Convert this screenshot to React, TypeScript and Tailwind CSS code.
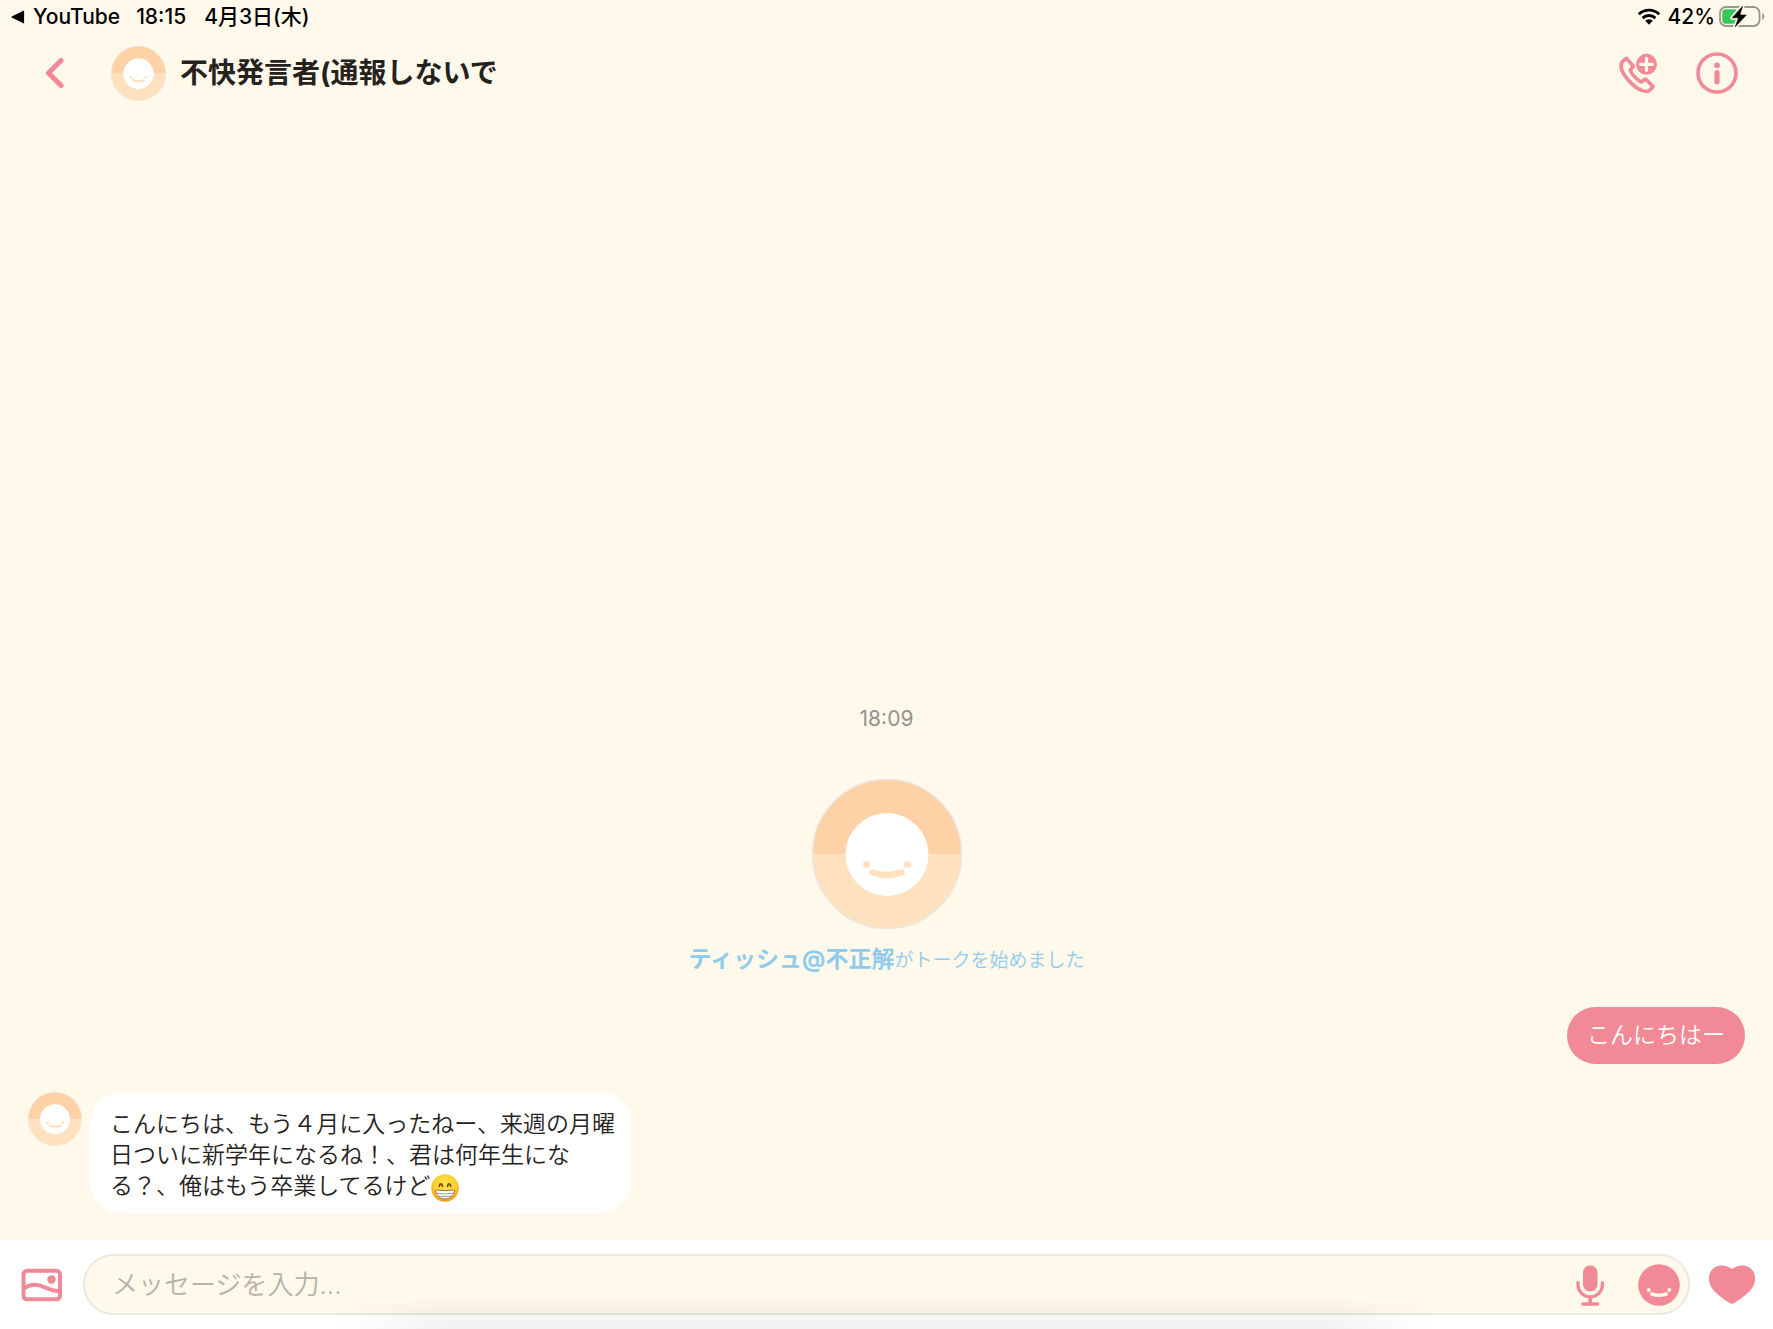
import { useId } from "react";

const PINK = "#f28997";

function Avatar({ className }: { className: string }) {
  const id = useId();
  return (
    <svg viewBox="0 0 150 150" className={className} role="img" aria-label="アイコン">
      <defs>
        <clipPath id={id}>
          <circle cx="75" cy="75" r="74.5" />
        </clipPath>
      </defs>
      <g clipPath={`url(#${id})`}>
        <rect width="150" height="75.5" fill="#fed1a6" />
        <rect y="75.5" width="150" height="75" fill="#fee2c0" />
      </g>
      <circle cx="75" cy="75" r="74.5" fill="none" stroke="#ece7de" strokeWidth="1.5" />
      <circle cx="75" cy="75.5" r="41.5" fill="#fff" />
      <circle cx="54.5" cy="85.5" r="3.6" fill="#fee1be" />
      <circle cx="95.5" cy="85.5" r="3.6" fill="#fee1be" />
      <path d="M60.500 93.500q14.500 5 29 0" fill="none" stroke="#fee1be" strokeWidth="6.500" strokeLinecap="round" />
    </svg>
  );
}

function GrinEmoji() {
  return (
    <svg viewBox="0 0 28 28" className="inline-block size-7 align-middle" role="img" aria-label="😁">
      <defs>
        <radialGradient id="grin-face" cx="50%" cy="36%" r="66%">
          <stop offset="0" stopColor="#ffe650" />
          <stop offset="0.6" stopColor="#ffcf30" />
          <stop offset="1" stopColor="#ee9418" />
        </radialGradient>
      </defs>
      <circle cx="14" cy="14" r="13.800" fill="url(#grin-face)" />
      <path d="M8.300 12.300c.5-3.300 2.600-3.300 3.200 0M16.500 12.300c.6-3.300 2.700-3.300 3.200 0" fill="none" stroke="#7a4d12" strokeWidth="1.700" strokeLinecap="round" />
      <path d="M5 16q9 1.400 18 0q.7 0 .5 1c-1 4.900-4.800 7.900-9.500 7.900s-8.500-3-9.500-7.900q-.2-1 .5-1z" fill="#fff" stroke="#8f6a3c" strokeWidth="0.900" />
      <path d="M5.200 19.200q8.800 1.600 17.600 0M7.600 22q6.400 1.200 12.800 0" fill="none" stroke="#8f8d8a" strokeWidth="0.900" />
    </svg>
  );
}

function StatusBar() {
  return (
    <div className="flex h-[34px] items-center justify-between pr-2 pl-[11px] text-[21px] font-medium text-black">
      <div className="flex items-center">
        <a href="#youtube" className="flex items-center gap-2">
          <svg viewBox="0 0 14 14" className="size-3.5" aria-hidden="true">
            <path d="M1 7L12.500 1.200v11.600z" fill="#000" stroke="#000" strokeWidth="1.200" strokeLinejoin="round" />
          </svg>
          YouTube
        </a>
        <time className="ml-4">18:15</time>
        <span className="ml-[18px]">4月3日(木)</span>
      </div>
      <div className="flex items-center">
        <svg viewBox="0 0 24 18" className="h-[18px] w-6" aria-label="Wi-Fi" role="img">
          <path d="M1.800 6.300a14.600 14.600 0 0 1 20.400 0M5.600 10.100a9.200 9.200 0 0 1 12.800 0" fill="none" stroke="#000" strokeWidth="2.900" />
          <path d="M8.200 12.800a5.500 5.500 0 0 1 7.600 0L12 16.800z" fill="#000" />
        </svg>
        <span className="ml-1.5">42%</span>
        <svg viewBox="0 0 46 24" className="ml-1 h-6 w-[46px]" role="img" aria-label="充電中">
          <rect x="1" y="2" width="39.500" height="19" rx="6" fill="none" stroke="#9c978e" strokeWidth="1.800" />
          <path d="M43.200 8.300v6.600q2.200-1 2.200-3.300t-2.200-3.300z" fill="#9c978e" />
          <rect x="3.300" y="4.300" width="15.500" height="14.400" rx="3.500" fill="#34c759" />
          <path d="M23.500 1.300L13.300 12.800h6.200L16.300 21.800L27.300 10h-6.400z" fill="#000" stroke="#fff9eb" strokeWidth="4" strokeLinejoin="round" />
          <path d="M23.500 1.300L13.300 12.800h6.200L16.300 21.800L27.300 10h-6.400z" fill="#000" stroke="#000" strokeWidth="0.600" strokeLinejoin="round" />
        </svg>
      </div>
    </div>
  );
}

function ChatHeader() {
  return (
    <header className="flex h-[78px] items-center pr-[35px] pl-10">
      <button type="button" aria-label="戻る" className="mr-[43px] cursor-pointer">
        <svg viewBox="0 0 28 32" className="h-8 w-7" aria-hidden="true">
          <path d="M21 3.500L8.500 16L21 28.500" fill="none" stroke={PINK} strokeWidth="5.200" strokeLinecap="round" strokeLinejoin="round" />
        </svg>
      </button>
      <Avatar className="size-[55px]" />
      <h1 className="ml-3.5 flex-1 text-[28px] leading-10 font-bold text-[#25221d]">不快発言者(通報しないで</h1>
      <button type="button" aria-label="通話に追加" className="cursor-pointer">
        <svg viewBox="0 0 40 42" className="h-[42px] w-10" fill="none" aria-hidden="true">
          <path d="M8.300 6.300L4.400 9.700C1.600 12.800 3 19.500 9.800 27.500C16.500 35.400 23.400 39.300 28.500 39.500C30.700 39.600 31.600 38.800 35 34.600L27.600 27.100L23.300 30C19.800 28.700 13.400 22 12.200 18.200L15.400 14.300Z" stroke={PINK} strokeWidth="3.600" strokeLinejoin="round" />
          <circle cx="28.500" cy="12.300" r="10.500" fill={PINK} />
          <path d="M28.500 6.300v12M22.500 12.300h12" stroke="#fff9eb" strokeWidth="3.200" strokeLinecap="round" />
        </svg>
      </button>
      <button type="button" aria-label="情報" className="ml-[38px] cursor-pointer">
        <svg viewBox="0 0 42 42" className="size-[42px]" fill="none" aria-hidden="true">
          <circle cx="21" cy="21" r="19" stroke={PINK} strokeWidth="3.600" />
          <circle cx="21" cy="13.300" r="2.900" fill={PINK} />
          <path d="M21 20.500v9.200" stroke={PINK} strokeWidth="5.200" strokeLinecap="round" />
        </svg>
      </button>
    </header>
  );
}

function Composer() {
  return (
    <form
      className="relative flex items-center bg-white pt-3.5 pr-4 pb-3.5 pl-5"
      onSubmit={(event) => event.preventDefault()}
    >
      <button type="button" aria-label="画像を送る" className="mr-5 cursor-pointer">
        <svg viewBox="0 0 43 34" className="h-[34px] w-[43px]" fill="none" stroke={PINK} aria-hidden="true">
          <rect x="3.500" y="2.800" width="36.500" height="28.500" rx="3.500" strokeWidth="4" />
          <path d="M4 20.500C12 14.500 19 16.500 25 19.500C30.500 22.300 35 23 39.500 23.500" strokeWidth="4" />
          <circle cx="31.500" cy="11.500" r="4.200" fill={PINK} stroke="none" />
        </svg>
      </button>
      <div className="flex h-[61px] flex-1 items-center rounded-full border-2 border-[#ebe8dc] bg-[#fff9eb] pr-2 pl-[27px]">
        <input
          type="text"
          aria-label="メッセージ"
          placeholder="メッセージを入力..."
          className="h-12 min-w-0 flex-1 bg-transparent text-[26px] font-[350] text-[#25221d] outline-none placeholder:text-[#b6b2a5]"
        />
        <button type="button" aria-label="音声入力" className="cursor-pointer">
          <svg viewBox="0 0 30 42" className="h-[42px] w-[30px]" fill="none" stroke={PINK} strokeLinecap="round" aria-hidden="true">
            <rect x="8" y="1.500" width="14.500" height="26" rx="7.250" fill={PINK} stroke="none" />
            <path d="M3 18.500v2.500a12.200 11.800 0 0 0 24.400 0v-2.500" strokeWidth="3.200" />
            <path d="M15.200 33v6M8 40h14.500" strokeWidth="3.600" />
          </svg>
        </button>
        <button type="button" aria-label="スタンプ" className="ml-[33px] cursor-pointer">
          <svg viewBox="0 0 42 42" className="size-[42px]" aria-hidden="true">
            <circle cx="21" cy="21" r="20.800" fill={PINK} />
            <circle cx="10.700" cy="26" r="1.900" fill="#fff9eb" />
            <circle cx="31.300" cy="26" r="1.900" fill="#fff9eb" />
            <path d="M13.800 30q7.200 2.600 14.400 0" fill="none" stroke="#fff9eb" strokeWidth="3.600" strokeLinecap="round" />
          </svg>
        </button>
      </div>
      <button type="button" aria-label="いいね" className="ml-[17px] cursor-pointer">
        <svg viewBox="0 0 50 42" className="h-[42px] w-[50px]" aria-hidden="true">
          <path d="M25 39.800C23 39.800 9 30.500 4.500 23.500C0 16.500 1.500 7 7.500 3.500C13.500 0.200 20 1.500 25 5C30 1.500 36.500 0.200 42.500 3.500C48.500 7 50 16.500 45.500 23.500C41 30.500 27 39.800 25 39.800Z" fill={PINK} />
        </svg>
      </button>
      <div className="pointer-events-none absolute inset-x-[19%] bottom-0 h-8 bg-linear-to-t from-black/5 via-black/4 to-transparent [mask-image:linear-gradient(to_right,transparent,black_10%,black_90%,transparent)]" />
    </form>
  );
}

export default function App() {
  return (
    <div className="flex min-h-screen flex-col bg-[#fff9eb] font-[Inter,'Noto_Sans_CJK_JP',sans-serif]" lang="ja">
      <StatusBar />
      <ChatHeader />
      <main className="flex flex-1 flex-col justify-end px-7 pb-[27px]">
        <div className="flex flex-col items-center">
          <time className="text-[21px] leading-8 text-[#96928a]">18:09</time>
          <Avatar className="mt-11 size-[150px]" />
          <p className="mt-3 text-[19px] leading-9 font-[350] text-[#8ecbed]">
            <strong className="text-[23px] font-bold">ティッシュ@不正解</strong>がトークを始めました
          </p>
        </div>
        <p className="mt-7 self-end rounded-full bg-[#f28997] px-5 py-3 text-[23px] leading-[33px] font-[350] text-white">
          こんにちはー
        </p>
        <div className="mt-7 flex items-start gap-2">
          <Avatar className="size-[54px]" />
          <p className="rounded-[32px] bg-white pt-[17px] pr-4 pb-[11px] pl-5 text-[23px] leading-[31px] font-[350] text-[#25221d]">
            こんにちは、もう４月に入ったねー、来週の月曜
            <br />
            日ついに新学年になるね！、君は何年生にな
            <br />
            る？、俺はもう卒業してるけど
            <GrinEmoji />
          </p>
        </div>
      </main>
      <Composer />
    </div>
  );
}
